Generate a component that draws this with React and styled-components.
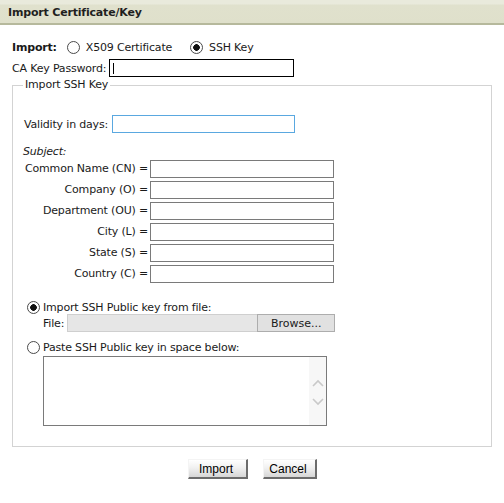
import React from "react";
import styled, { createGlobalStyle } from "styled-components";

const Global = createGlobalStyle`
  html, body { margin: 0; padding: 0; background: #fff; }
  body { font-family: "DejaVu Sans", Verdana, sans-serif; font-size: 11px; letter-spacing: -0.18px; color: #1a1a1a; }
  * { box-sizing: border-box; }
`;

const Page = styled.div`
  width: 504px;
  display: flex;
  flex-direction: column;
`;

const Header = styled.div`
  height: 25px;
  padding: 1px 0 0 8px;
  display: flex;
  align-items: center;
  font-weight: bold;
  font-size: 11px;
  color: #1f1f1f;
  background: linear-gradient(#e9eadc 0, #e9eadc 4px, #e0e1cd 5px, #dfe0cb 100%);
  border-bottom: 2px solid #b6b99c;
`;

const Body = styled.div`
  padding: 0 12px;
  display: flex;
  flex-direction: column;
`;

const Row = styled.div`
  display: flex;
  align-items: center;
  height: ${(p) => p.$h || 18}px;
  margin-top: ${(p) => p.$mt || 0}px;
  margin-left: ${(p) => p.$ml || 0}px;
  gap: ${(p) => (p.$gap != null ? p.$gap : 3)}px;
  white-space: nowrap;
`;

const Bold = styled.span`
  font-weight: bold;
  margin-right: 10px;
`;

const Radio = styled.input.attrs({ type: "radio" })`
  appearance: none;
  -webkit-appearance: none;
  width: 13px;
  height: 13px;
  margin: 0 ${(p) => p.$mr || 3}px 0 ${(p) => p.$ml || 0}px;
  border: 1px solid #4a4a4a;
  border-radius: 50%;
  background: #fff;
  flex: none;
  &:checked {
    background: radial-gradient(circle, #111 0, #111 3px, #fff 3.6px);
  }
`;

const Gap = styled.span`
  display: inline-block;
  width: ${(p) => p.$w}px;
`;

const TextInput = styled.input.attrs({ type: "text" })`
  width: ${(p) => p.$w}px;
  height: 18px;
  margin: 0;
  padding: 0 3px;
  font: inherit;
  background: #fff;
  border: 1px solid ${(p) => p.$border || "#7a7a7a"};
  outline: none;
  flex: none;
`;

const FocusedInput = styled(TextInput)`
  border-color: #000;
  background: linear-gradient(#000, #000) no-repeat 3px 3px / 1px 11px, #fff;
`;

const Fieldset = styled.fieldset`
  margin: 1px 0 0 0;
  padding: 23px 11px 20px 11px;
  border: 1px solid #d3d3d3;
  display: flex;
  flex-direction: column;
  min-width: 0;
`;

const Legend = styled.legend`
  padding: 0 2px;
  margin-left: -1px;
  line-height: 14px;
  font-size: 11px;
`;

const Subject = styled.div`
  font-style: italic;
  height: 14px;
  line-height: 14px;
  margin-top: 12px;
  margin-left: -1px;
`;

const SubjectGrid = styled.div`
  display: grid;
  grid-template-columns: 124px 184px;
  column-gap: 2px;
  row-gap: 3px;
  grid-auto-rows: 18px;
  margin-top: 1px;
`;

const FieldLabel = styled.label`
  text-align: right;
  line-height: 18px;
  white-space: nowrap;
`;

const FileBox = styled.div`
  display: flex;
  height: 18px;
  width: 268px;
`;

const FileField = styled.div`
  flex: 1;
  background: #e6e6e6;
  border: 1px solid #cfcfcf;
  border-right: none;
`;

const BrowseButton = styled.button`
  width: 78px;
  height: 18px;
  margin: 0;
  padding: 0;
  font: inherit;
  color: #1a1a1a;
  background: #e1e1e1;
  border: 1px solid #adadad;
`;

const TextAreaBox = styled.div`
  display: flex;
  width: 284px;
  height: 70px;
  margin: 2px 0 0 19px;
  border: 1px solid #7a7a7a;
  background: #fff;
`;

const TextArea = styled.textarea`
  flex: 1;
  border: none;
  resize: none;
  outline: none;
  margin: 0;
  padding: 2px;
  font: inherit;
  overflow: hidden;
`;

const ScrollTrack = styled.div`
  width: 17px;
  background: #f7f7f7;
  display: flex;
  flex-direction: column;
  align-items: center;
  justify-content: center;
  gap: 11px;
  padding-top: 2px;
`;

const Buttons = styled.div`
  display: flex;
  justify-content: center;
  gap: 15px;
  margin-top: 12px;
`;

const ActionButton = styled.button`
  width: ${(p) => p.$w}px;
  height: 20px;
  margin: 0;
  padding: 0 2px 0 0;
  font-family: "Liberation Sans", Arial, sans-serif;
  font-size: 12px;
  letter-spacing: 0;
  color: #000;
  background: linear-gradient(#ffffff, #f1f1f1 45%, #d6d6d6);
  border: none;
  border-right: 2px solid #6c6c6c;
  border-bottom: 2px solid #6c6c6c;
  border-top: 1px solid #f4f4f4;
  border-left: 1px solid #f4f4f4;
`;

const Chevron = ({ up }) => (
  <svg width="12" height="8" viewBox="0 0 12 8">
    <path
      d={up ? "M1 7 L6 2 L11 7" : "M1 1 L6 6 L11 1"}
      fill="none"
      stroke="#c9c9c9"
      strokeWidth="1.6"
    />
  </svg>
);

const subjectFields = [
  "Common Name (CN) =",
  "Company (O) =",
  "Department (OU) =",
  "City (L) =",
  "State (S) =",
  "Country (C) =",
];

export default function App() {
  return (
    <Page>
      <Global />
      <Header>Import Certificate/Key</Header>
      <Body>
        <Row $mt={13} $gap={0}>
          <Bold>Import:</Bold>
          <Radio name="kind" $mr={6} />
          <span>X509 Certificate</span>
          <Gap $w={18} />
          <Radio name="kind" defaultChecked $mr={6} />
          <span>SSH Key</span>
        </Row>
        <Row $mt={3}>
          <span>CA Key Password:</span>
          <FocusedInput $w={185} />
        </Row>
        <Fieldset>
          <Legend>Import SSH Key</Legend>
          <Row $gap={4}>
            <span>Validity in days:</span>
            <TextInput $w={183} $border="#5aa8e0" />
          </Row>
          <Subject>Subject:</Subject>
          <SubjectGrid>
            {subjectFields.map((f) => (
              <React.Fragment key={f}>
                <FieldLabel>{f}</FieldLabel>
                <TextInput $w={184} />
              </React.Fragment>
            ))}
          </SubjectGrid>
          <Row $mt={18} $h={13} $gap={0}>
            <Radio name="src" defaultChecked $ml={3} $mr={3} />
            <span>Import SSH Public key from file:</span>
          </Row>
          <Row $ml={19}>
            <span>File:</span>
            <FileBox>
              <FileField />
              <BrowseButton>Browse...</BrowseButton>
            </FileBox>
          </Row>
          <Row $mt={9} $h={13} $gap={0}>
            <Radio name="src" $ml={3} $mr={3} />
            <span>Paste SSH Public key in space below:</span>
          </Row>
          <TextAreaBox>
            <TextArea />
            <ScrollTrack>
              <Chevron up />
              <Chevron />
            </ScrollTrack>
          </TextAreaBox>
        </Fieldset>
        <Buttons>
          <ActionButton $w={60}>Import</ActionButton>
          <ActionButton $w={54}>Cancel</ActionButton>
        </Buttons>
      </Body>
    </Page>
  );
}
